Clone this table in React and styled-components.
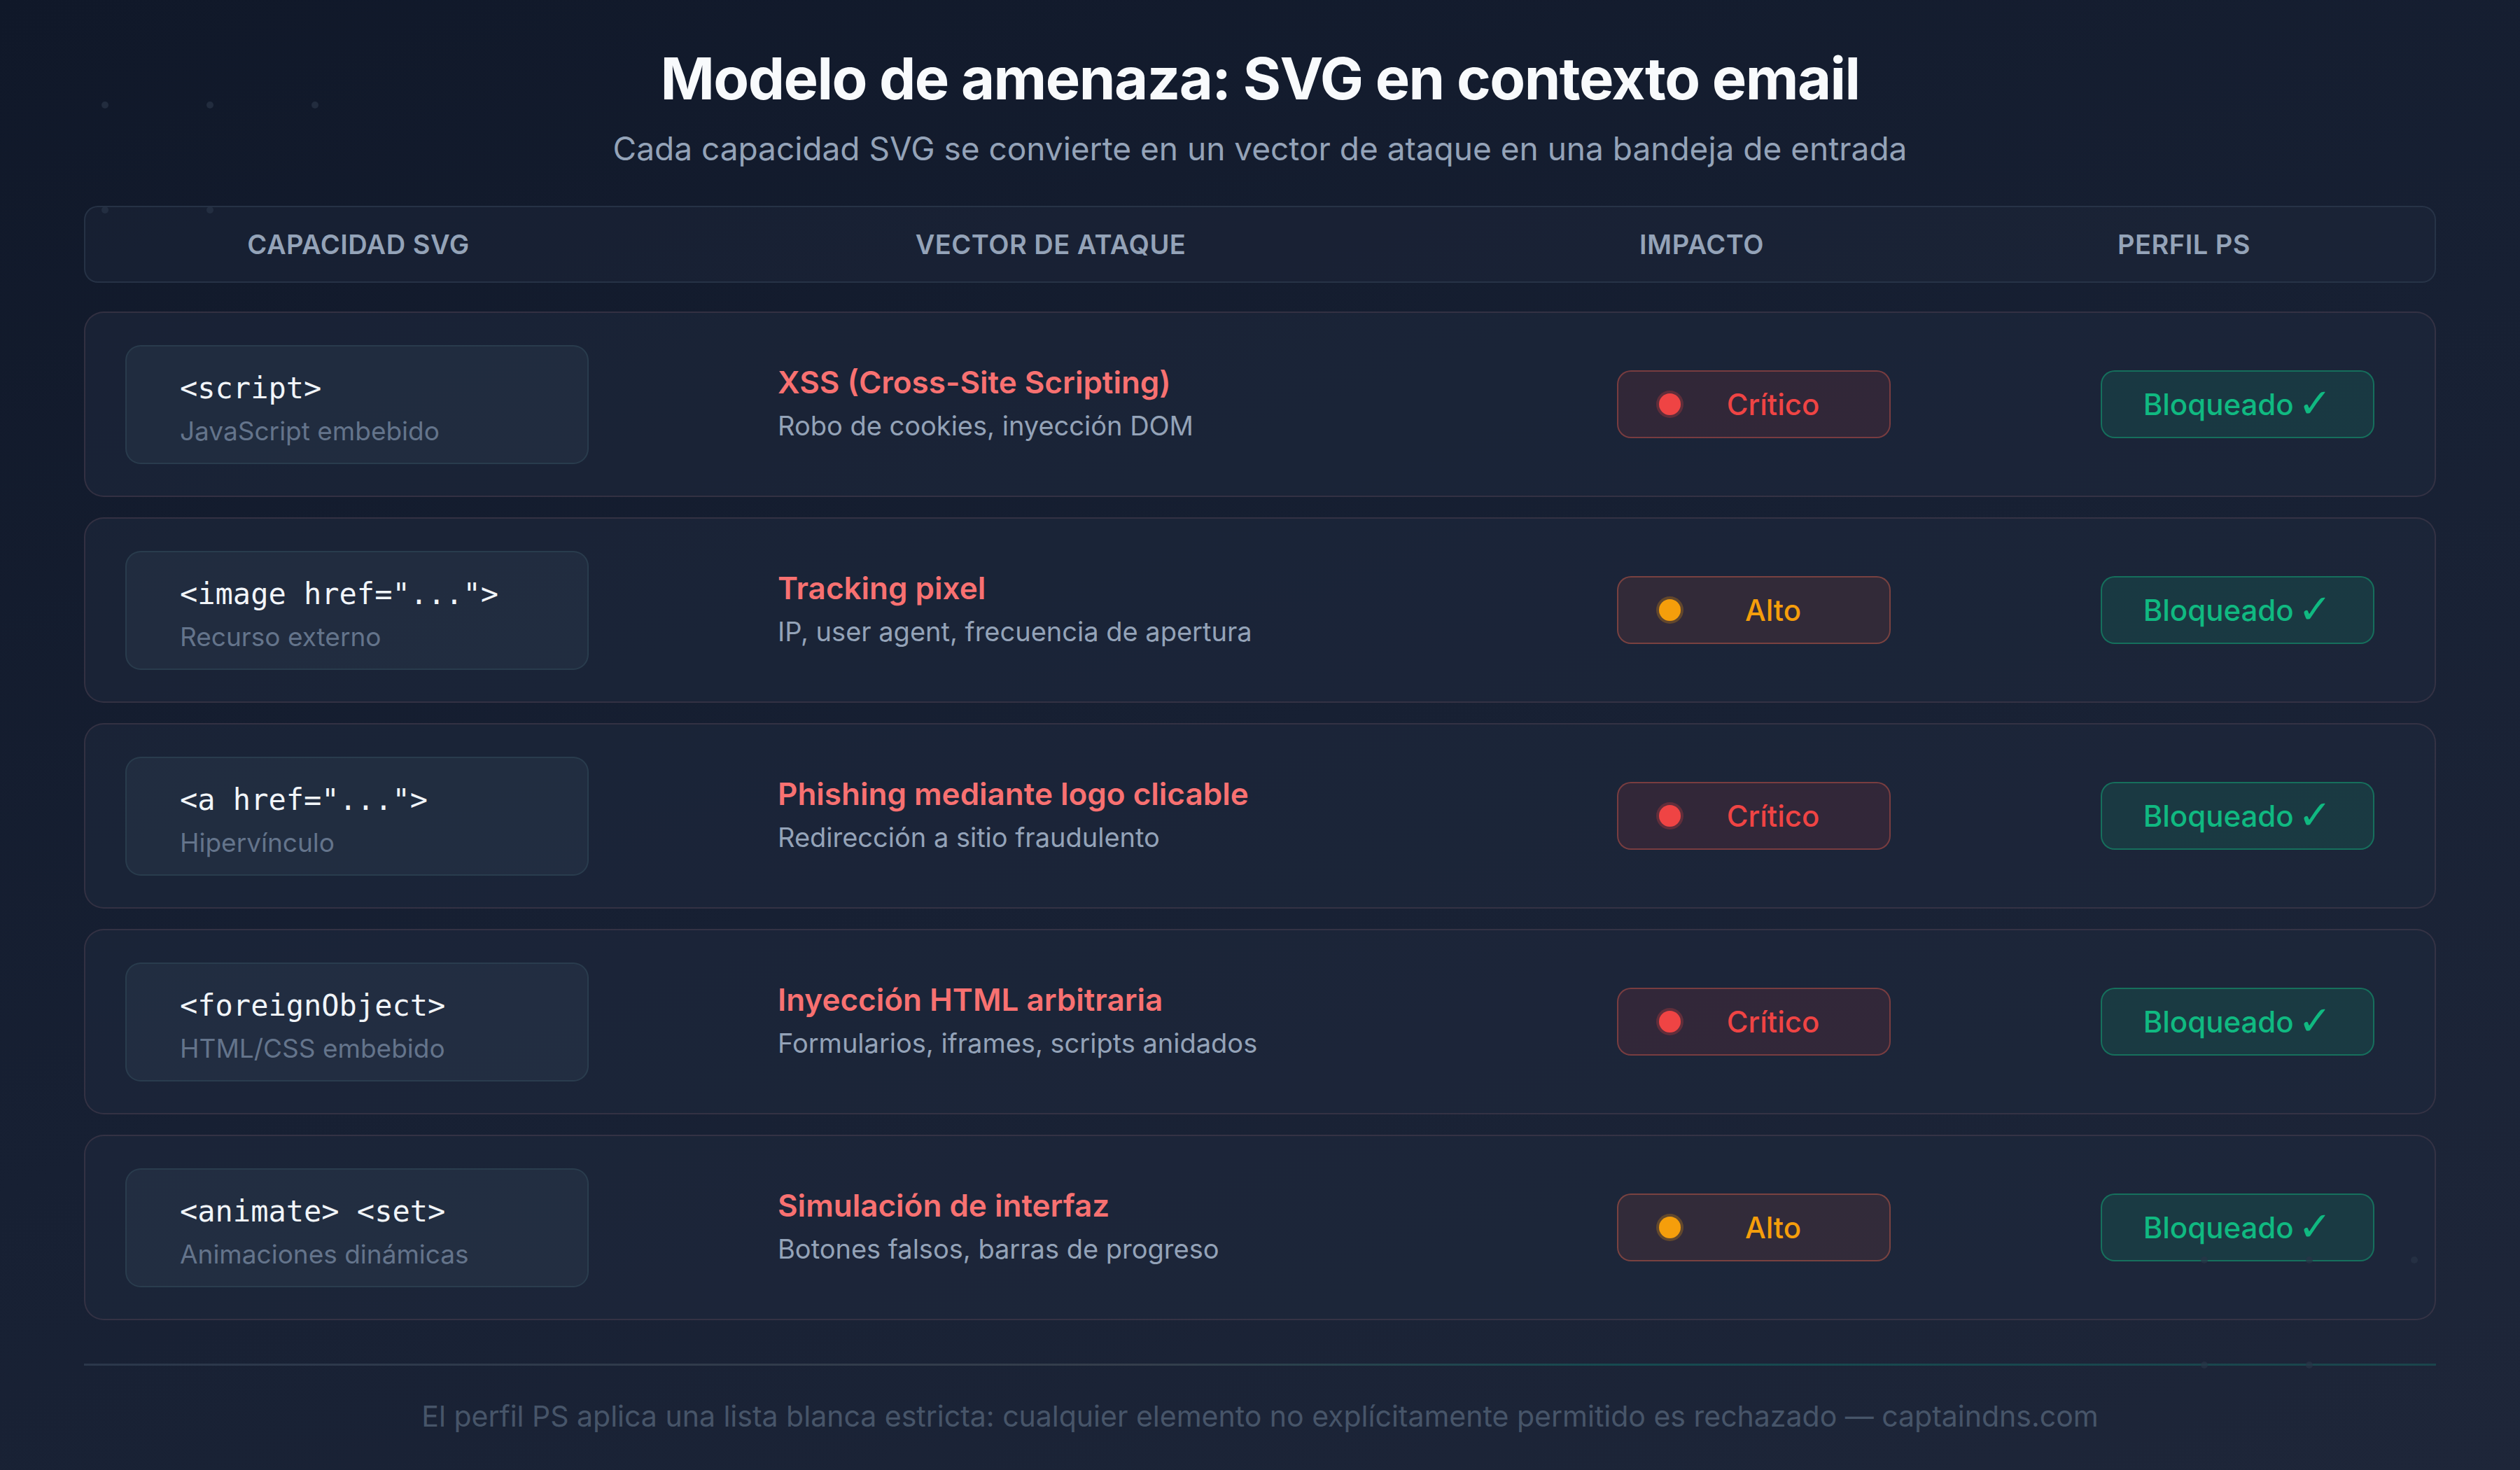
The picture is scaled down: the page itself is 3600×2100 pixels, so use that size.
import React from 'react'
import styled, { createGlobalStyle } from 'styled-components'

const GlobalStyle = createGlobalStyle`
  html, body {
    margin: 0;
    padding: 0;
    background: #111a2c;
  }
  * {
    box-sizing: border-box;
  }
`

const tones = {
  critical: { dot: '#ef4444', text: '#ef4444', bg: 'rgba(239, 68, 68, 0.11)', border: 'rgba(220, 90, 75, 0.42)' },
  high: { dot: '#f59e0b', text: '#f59e0b', bg: 'rgba(239, 90, 68, 0.11)', border: 'rgba(220, 100, 75, 0.42)' },
}

const rows = [
  { code: '<script>', sub: 'JavaScript embebido', title: 'XSS (Cross-Site Scripting)', desc: 'Robo de cookies, inyección DOM', impact: 'Crítico', tone: 'critical' },
  { code: '<image href="...">', sub: 'Recurso externo', title: 'Tracking pixel', desc: 'IP, user agent, frecuencia de apertura', impact: 'Alto', tone: 'high' },
  { code: '<a href="...">', sub: 'Hipervínculo', title: 'Phishing mediante logo clicable', desc: 'Redirección a sitio fraudulento', impact: 'Crítico', tone: 'critical' },
  { code: '<foreignObject>', sub: 'HTML/CSS embebido', title: 'Inyección HTML arbitraria', desc: 'Formularios, iframes, scripts anidados', impact: 'Crítico', tone: 'critical' },
  { code: '<animate> <set>', sub: 'Animaciones dinámicas', title: 'Simulación de interfaz', desc: 'Botones falsos, barras de progreso', impact: 'Alto', tone: 'high' },
]

const Page = styled.div`
  position: relative;
  width: 3600px;
  height: 2100px;
  overflow: hidden;
  padding: 0 120px;
  background: linear-gradient(160deg, #101829 0%, #172033 50%, #1e2639 100%);
  font-family: Inter, "Noto Sans", "Liberation Sans", sans-serif;
  display: flex;
  flex-direction: column;
`

const Dots = styled.svg`
  position: absolute;
  left: ${p => p.$x}px;
  top: ${p => p.$y}px;
  pointer-events: none;
`

const Title = styled.h1`
  margin: 64px 0 0;
  text-align: center;
  font-size: 83px;
  line-height: 96px;
  font-weight: 700;
  letter-spacing: -1.5px;
  color: #f8fafc;
`

const Subtitle = styled.p`
  margin: 25px 0 0;
  text-align: center;
  font-size: 46px;
  line-height: 55px;
  font-weight: 400;
  color: #94a3b8;
`

const HeaderBar = styled.div`
  margin-top: 54px;
  height: 110px;
  display: grid;
  grid-template-columns: 780px 1198px 662px 1fr;
  align-items: center;
  border-radius: 20px;
  border: 2px solid rgba(51, 65, 85, 0.55);
  background: rgba(30, 41, 59, 0.45);
`

const HeaderCell = styled.div`
  text-align: center;
  font-size: 38px;
  font-weight: 600;
  letter-spacing: 0.5px;
  color: #94a3b8;
  text-transform: uppercase;
`

const RowList = styled.div`
  margin-top: 41px;
  display: flex;
  flex-direction: column;
  gap: 29px;
`

const Row = styled.div`
  height: 265px;
  display: grid;
  grid-template-columns: 932px 1199px 691px 390px;
  align-items: center;
  padding-left: 57px;
  border-radius: 28px;
  border: 2px solid rgba(140, 100, 110, 0.22);
  background: rgba(30, 40, 60, 0.6);
`

const CodeBox = styled.div`
  width: 662px;
  height: 170px;
  padding: 35px 0 0 76px;
  border-radius: 22px;
  border: 2px solid rgba(90, 140, 150, 0.16);
  background: rgba(51, 65, 85, 0.32);
  display: flex;
  flex-direction: column;
  gap: 14px;
`

const Code = styled.div`
  font-family: "DejaVu Sans Mono", "Liberation Mono", monospace;
  font-size: 42px;
  line-height: 50px;
  color: #f1f5f9;
  white-space: pre;
`

const CodeSub = styled.div`
  font-size: 37px;
  line-height: 44px;
  color: #64748b;
`

const Vector = styled.div`
  display: flex;
  flex-direction: column;
  gap: 13px;
  margin-top: -4px;
`

const VectorTitle = styled.div`
  font-size: 44px;
  line-height: 52px;
  font-weight: 600;
  color: #f87171;
`

const VectorDesc = styled.div`
  font-size: 38px;
  line-height: 46px;
  color: #94a3b8;
`

const Badge = styled.div`
  width: 391px;
  height: 97px;
  border-radius: 20px;
  display: flex;
  align-items: center;
  font-size: 42px;
  font-weight: 500;
`

const ImpactBadge = styled(Badge)`
  padding: 0 34px 0 58px;
  border: 2px solid ${p => tones[p.$tone].border};
  background: ${p => tones[p.$tone].bg};
  color: ${p => tones[p.$tone].text};
`

const Dot = styled.span`
  width: 31px;
  height: 31px;
  flex: none;
  border-radius: 50%;
  background: ${p => tones[p.$tone].dot};
  box-shadow: 0 0 0 4px ${p => tones[p.$tone].dot}40;
`

const ImpactLabel = styled.span`
  flex: 1;
  text-align: center;
`

const BlockedBadge = styled(Badge)`
  justify-content: center;
  gap: 6px;
  border: 2px solid rgba(16, 185, 129, 0.42);
  background: rgba(16, 185, 129, 0.14);
  color: #10b981;
`

const Check = styled.span`
  font-family: "DejaVu Sans", sans-serif;
  font-size: 58px;
  font-weight: 400;
  line-height: 1;
  margin-top: -4px;
`

const FooterLine = styled.div`
  margin-top: 62px;
  height: 3px;
  background: linear-gradient(90deg, rgba(51, 65, 85, 0.7) 0%, rgba(70, 80, 90, 0.6) 45%, rgba(16, 120, 110, 0.45) 65%, rgba(25, 90, 90, 0.6) 100%);
`

const FooterText = styled.p`
  margin: 47px 0 0;
  text-align: center;
  font-size: 41px;
  line-height: 50px;
  color: #475569;
`

function DotCluster({ x, y }) {
  return (
    <Dots $x={x} $y={y} width="320" height="170" viewBox="0 0 320 170">
      <circle cx="10" cy="10" r="5" fill="#2a3447" opacity="0.7" />
      <circle cx="160" cy="10" r="5" fill="#2a3447" opacity="0.7" />
      <circle cx="310" cy="10" r="5" fill="#2a3447" opacity="0.7" />
      <circle cx="10" cy="160" r="5" fill="#2a3447" opacity="0.7" />
      <circle cx="160" cy="160" r="5" fill="#2a3447" opacity="0.7" />
    </Dots>
  )
}

export default function App() {
  return (
    <Page>
      <GlobalStyle />
      <DotCluster x={140} y={140} />
      <DotCluster x={3139} y={1790} />
      <Title>Modelo de amenaza: SVG en contexto email</Title>
      <Subtitle>Cada capacidad SVG se convierte en un vector de ataque en una bandeja de entrada</Subtitle>
      <HeaderBar>
        <HeaderCell>Capacidad SVG</HeaderCell>
        <HeaderCell>Vector de ataque</HeaderCell>
        <HeaderCell>Impacto</HeaderCell>
        <HeaderCell>Perfil PS</HeaderCell>
      </HeaderBar>
      <RowList>
        {rows.map(r => (
          <Row key={r.code}>
            <CodeBox>
              <Code>{r.code}</Code>
              <CodeSub>{r.sub}</CodeSub>
            </CodeBox>
            <Vector>
              <VectorTitle>{r.title}</VectorTitle>
              <VectorDesc>{r.desc}</VectorDesc>
            </Vector>
            <ImpactBadge $tone={r.tone}>
              <Dot $tone={r.tone} />
              <ImpactLabel>{r.impact}</ImpactLabel>
            </ImpactBadge>
            <BlockedBadge>
              <span>Bloqueado</span>
              <Check>✓</Check>
            </BlockedBadge>
          </Row>
        ))}
      </RowList>
      <FooterLine />
      <FooterText>El perfil PS aplica una lista blanca estricta: cualquier elemento no explícitamente permitido es rechazado — captaindns.com</FooterText>
    </Page>
  )
}
